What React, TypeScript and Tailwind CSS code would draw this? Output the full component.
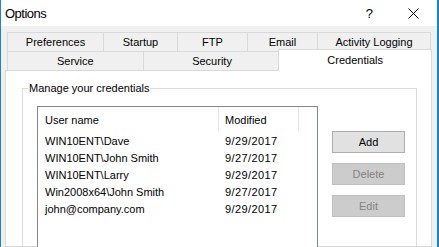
import React from "react";

const rows = [
  ["WIN10ENT\\Dave", "9/29/2017"],
  ["WIN10ENT\\John Smith", "9/27/2017"],
  ["WIN10ENT\\Larry", "9/29/2017"],
  ["Win2008x64\\John Smith", "9/27/2017"],
  ["john@company.com", "9/29/2017"],
];

function Tab({ w, label, first }: { w: string; label: string; first?: boolean }) {
  return (
    <div
      className={`${w} ${first ? "" : "-ml-px"} h-[19px] border-t border-x border-[#d9d9d9] bg-[#f0f0f0] flex items-center justify-center pt-[1px] text-[11px] leading-[13px] text-black`}
    >
      {label}
    </div>
  );
}

export default function App() {
  return (
    <div className="w-[439px] h-[247px] overflow-hidden bg-[#f0f0f0] border-l border-r-2 border-[#1883d7] flex flex-col font-['Liberation_Sans',Arial,sans-serif] text-black">
      {/* Title bar */}
      <div className="h-[26px] shrink-0 bg-white flex items-center pl-[4px]">
        <span className="text-[13px] leading-[16px] tracking-[-0.5px] pt-[1px]">Options</span>
        <div className="flex-1" />
        <span className="text-[13px] leading-[16px] pt-[1px] mr-[35px]">?</span>
        <svg width="11" height="11" viewBox="0 0 11 11" className="mr-[18px]">
          <path d="M0.5 0.5 L10.5 10.5 M10.5 0.5 L0.5 10.5" stroke="#000" strokeWidth="1" />
        </svg>
      </div>

      {/* Body */}
      <div className="flex-1 flex flex-col pt-[6px] pl-[4px] pr-[5px] min-h-0">
        {/* Tab row 1 */}
        <div className="flex pl-[2px]">
          <Tab w="w-[97px]" label="Preferences" first />
          <Tab w="w-[75px]" label="Startup" />
          <Tab w="w-[71px]" label="FTP" />
          <Tab w="w-[71px]" label="Email" />
          <Tab w="w-[114px]" label="Activity Logging" />
        </div>
        {/* Tab row 2 */}
        <div className="flex pl-[2px] items-start h-[19px] relative z-10">
          <Tab w="w-[137px]" label="Service" first />
          <Tab w="w-[139px]" label="Security" />
          <div className="w-[154px] -ml-[3px] -mt-[2px] h-[22px] border-t border-x border-[#d9d9d9] bg-white flex items-start justify-center pt-[4px] text-[11px] leading-[13px] relative">
            Credentials
          </div>
        </div>

        {/* Panel */}
        <div className="flex-1 bg-white border border-[#d9d9d9] pl-[16px] pr-[14px] pt-[11px] min-h-0">
          <fieldset className="border border-[#dcdcdc] px-0 h-[200px] m-0">
            <legend className="ml-[5px] px-[1px] text-[11px] leading-[13px]">Manage your credentials</legend>
            <div className="flex pl-[14px] pt-[11px]">
              {/* List view */}
              <div className="w-[281px] h-[200px] border border-[#828790] bg-white">
                <div className="flex h-[24px] text-[11px]">
                  <div className="w-[181px] border-r border-[#e5e5e5] pl-[7px] pt-[2px] leading-[22px]">User name</div>
                  <div className="w-[80px] border-r border-[#e5e5e5] pl-[6px] pt-[2px] leading-[22px]">Modified</div>
                </div>
                <div className="mt-[2px]">
                  {rows.map(([u, d]) => (
                    <div key={u} className="flex h-[17px] text-[11px] leading-[17px]">
                      <div className="w-[181px] pl-[7px]">{u}</div>
                      <div className="w-[80px] pl-[6px] tracking-[0.4px]">{d}</div>
                    </div>
                  ))}
                </div>
              </div>
              {/* Buttons */}
              <div className="ml-[14px] mt-[25px] flex flex-col gap-[10px]">
                <div className="w-[73px] h-[22px] border border-[#adadad] bg-[#e1e1e1] flex items-center justify-center text-[11px] leading-[13px]">
                  Add
                </div>
                <div className="w-[73px] h-[22px] border border-[#bfbfbf] bg-[#cccccc] flex items-center justify-center text-[11px] leading-[13px] text-[#838383]">
                  Delete
                </div>
                <div className="w-[73px] h-[22px] border border-[#bfbfbf] bg-[#cccccc] flex items-center justify-center text-[11px] leading-[13px] text-[#838383]">
                  Edit
                </div>
              </div>
            </div>
          </fieldset>
        </div>
      </div>
    </div>
  );
}
